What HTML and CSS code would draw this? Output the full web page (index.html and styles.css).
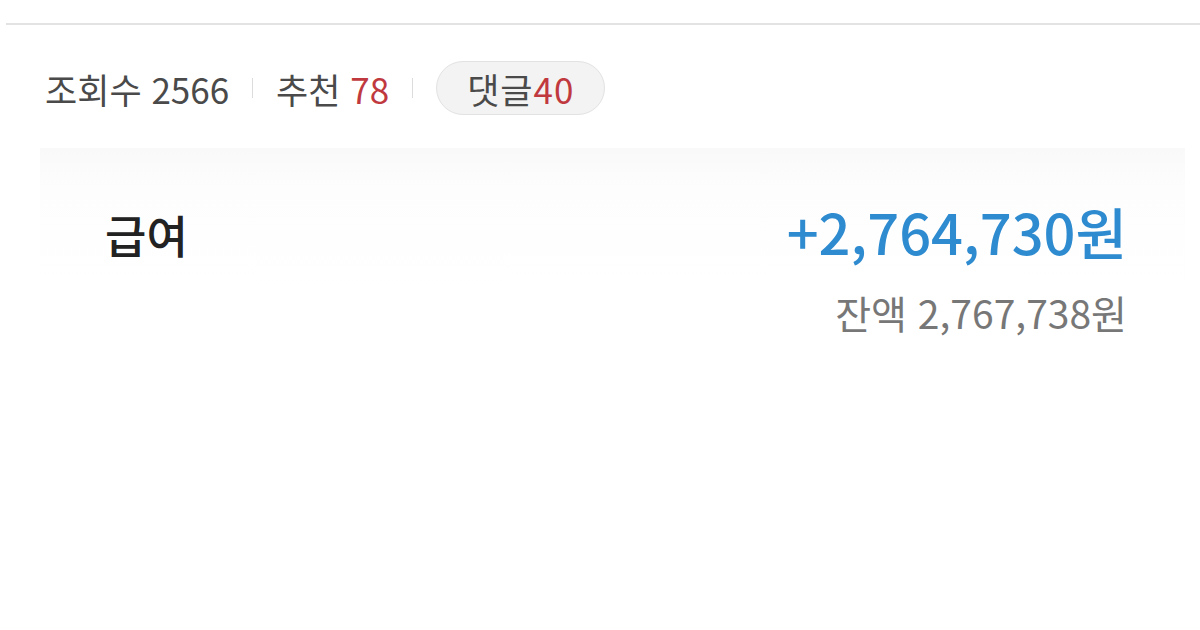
FILE: index.html
```html
<!DOCTYPE html>
<html lang="ko">
<head>
    <meta charset="UTF-8">
    <meta name="viewport" content="width=device-width, initial-scale=1.0">
    <title>급여</title>
    <link rel="stylesheet" href="styles.css">
</head>
<body>
    <div class="topline"></div>

    <div class="stats">
        <span class="stat">조회수 2566</span>
        <span class="sep"></span>
        <span class="stat">추천 <em>78</em></span>
        <span class="sep"></span>
        <span class="pill">댓글<em>40</em></span>
    </div>

    <div class="card">
        <div class="row">
            <span class="label">급여</span>
            <span class="amount">+2,764,730원</span>
        </div>
        <div class="balance">잔액 2,767,738원</div>
    </div>
</body>
</html>
```

FILE: styles.css
```css
body {
    margin: 0;
    background: #fff;
    font-family: "Noto Sans CJK KR", "Noto Sans", sans-serif;
    color: #333;
}

.topline {
    height: 2px;
    margin: 23px 0 0 6px;
    background: #e3e3e3;
}

.stats {
    display: flex;
    align-items: center;
    gap: 23px;
    height: 54px;
    margin-top: 36px;
    padding-left: 45px;
    font-size: 35px;
    color: #4a4a4a;
}

.stats em {
    font-style: normal;
    color: #c0393e;
}

.sep {
    width: 1px;
    height: 20px;
    background: #dcdcdc;
}

.pill {
    display: flex;
    align-items: center;
    height: 52px;
    padding: 0 30px;
    border: 1px solid #e2e2e2;
    border-radius: 28px;
    background: #f3f3f3;
    letter-spacing: 1px;
}

.card {
    margin: 33px 15px 0 40px;
    padding: 46px 58px 0 65px;
    background: linear-gradient(180deg, #f9f9f9 0, #fdfdfd 40px, #fff 140px);
}

.row {
    display: flex;
    justify-content: space-between;
    align-items: center;
    height: 80px;
}

.label {
    font-size: 45px;
    font-weight: 500;
    color: #222;
}

.amount {
    margin-bottom: 8px;
    font-size: 56px;
    font-weight: 500;
    color: #2e8bd0;
}

.balance {
    margin-top: 10px;
    text-align: right;
    font-size: 39px;
    color: #777;
}
```
